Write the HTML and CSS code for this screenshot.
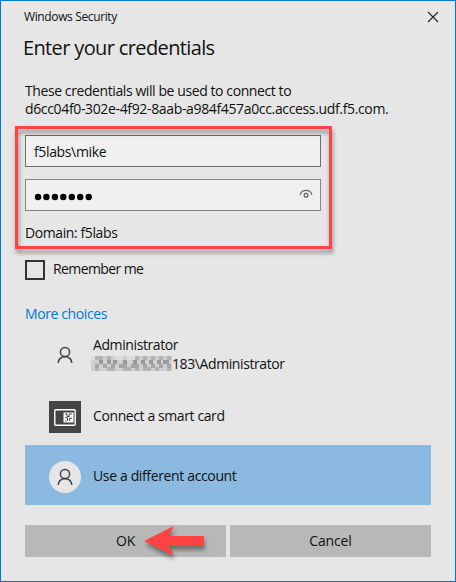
FILE: index.html
```html
<!DOCTYPE html>
<html lang="en">
<head>
<meta charset="utf-8">
<title>Windows Security</title>
<link rel="stylesheet" href="styles.css">
</head>
<body>
<main class="dialog">
  <header class="titlebar">
    <span class="t-bar">Windows Security</span>
    <svg class="close" width="12" height="12" viewBox="0 0 12 12"><path d="M1 1l10 10M11 1L1 11" stroke="#222" stroke-width="1.1" fill="none"/></svg>
  </header>
  <h1 class="t-head">Enter your credentials</h1>
  <p class="intro"><span class="t-intro1">These credentials will be used to connect to</span><br><span class="t-intro2">d6cc04f0-302e-4f92-8aab-a984f457a0cc.access.udf.f5.com.</span></p>
  <section class="fields">
    <div class="field field-user"><span class="t-user">f5labs\mike</span></div>
    <div class="field">
      <svg class="dots" width="62" height="10" viewBox="0 0 62 10"><g fill="#000"><circle cx="5" cy="5" r="3.2"/><circle cx="13.4" cy="5" r="3.2"/><circle cx="21.9" cy="5" r="3.2"/><circle cx="30.3" cy="5" r="3.2"/><circle cx="38.8" cy="5" r="3.2"/><circle cx="47.2" cy="5" r="3.2"/><circle cx="55.7" cy="5" r="3.2"/></g></svg>
      <svg class="eye" width="14" height="10" viewBox="0 0 14 10"><path d="M1 6.2C1.8 3 4 1.4 7 1.4S12.2 3 13 6.2" fill="none" stroke="#666" stroke-width="1.1"/><circle cx="7" cy="6.3" r="1.9" fill="none" stroke="#555" stroke-width="1.2"/></svg>
    </div>
    <div class="domain"><span class="t-domain">Domain: f5labs</span></div>
    <div class="highlight"></div>
  </section>
  <div class="remember"><span class="box"></span><span class="t-remember">Remember me</span></div>
  <div class="more"><span class="t-more">More choices</span></div>
  <ul class="choices">
    <li class="choice admin">
      <span class="icon"><svg width="16" height="18" viewBox="0 0 16 18"><g fill="none" stroke="#444" stroke-width="1.5"><circle cx="8" cy="6" r="4.6"/><path d="M1.2 17C1.5 13 4.2 10.7 8 10.7S14.5 13 14.8 17"/></g></svg></span>
      <div class="lines">
        <div><span class="t-admin">Administrator</span></div>
        <div class="account"><svg class="mosaic" width="81" height="15" viewBox="0 0 81 15" fill="none" stroke-width="4" shape-rendering="crispEdges">
          <path d="M0 7.500h81" stroke="#cfcfcf" stroke-width="15"/>
          <path d="M0 2h4M24 2h8M36 2h4M40 2h4M36 14h4" stroke="#dddddd"/>
          <path d="M4 2h8M16 2h4M44 2h4M52 2h4M60 2h4M68 2h4M76 2h4M4 13h4M16 13h8M32 13h8M44 13h4M52 13h8M64 13h4M76 13h4" stroke="#b3b3b3"/>
          <path d="M8 6h4M16 6h4M22 6h4M32 6h4M42 6h4M50 6h4M58 6h4M66 6h4M72 6h6" stroke="#999999"/>
          <path d="M4 10h4M12 10h4M20 10h4M28 10h8M32 10h4M40 10h8M52 10h4M60 10h4M68 10h4M76 10h4" stroke="#a6a6a6"/>
        </svg><span class="t-path">183\Administrator</span></div>
      </div>
    </li>
    <li class="choice card">
      <span class="icon dark"><svg width="22" height="17" viewBox="0 0 22 17"><rect x=".8" y=".8" width="20.4" height="15.4" rx="1" fill="none" stroke="#fff" stroke-width="1.4"/><path d="M9.500 3.500h10v10h-10z" fill="#fff"/><path d="M11 5h2v2.500h2M16 5h2M11 8.700h2.500v3M15.200 4.500v3.500M15.500 12V9.300H18M11 12h1.500" fill="none" stroke="#444" stroke-width="1"/></svg></span>
      <span class="t-card">Connect a smart card</span>
    </li>
    <li class="choice selected">
      <span class="icon round"><svg width="16" height="18" viewBox="0 0 16 18"><g fill="none" stroke="#444" stroke-width="1.5"><circle cx="8" cy="6" r="4.6"/><path d="M1.2 17C1.5 13 4.2 10.7 8 10.7S14.5 13 14.8 17"/></g></svg></span>
      <span class="t-diff">Use a different account</span>
    </li>
  </ul>
  <footer class="actions">
    <div class="button"><span class="t-ok">OK</span>
      <svg class="arrow" width="62" height="32" viewBox="0 0 62 32"><path d="M0 16L30 1L25 11H60V21H25L30 31Z" fill="#ff4343"/></svg>
    </div>
    <div class="button"><span class="t-cancel">Cancel</span></div>
  </footer>
</main>
</body>
</html>
```

FILE: styles.css
```css
* { box-sizing: border-box; }
body { margin: 0; }
.dialog {
  width: 456px;
  height: 582px;
  padding: 0 24px;
  border: 1px solid #0078d7;
  background: #e6e6e6;
  color: #111;
  font: 14px/18px "Open Sans", "Noto Sans", sans-serif;
  letter-spacing: -.4px;
  white-space: nowrap;
  overflow: hidden;
}
.titlebar { display: flex; align-items: center; justify-content: space-between; height: 31px; margin-right: -8px; font-size: 12px; }
.t-bar { letter-spacing: -.37px; margin-left: -1px; }
.t-head { display: block; margin: 0 0 0 -2px; height: 32px; font-size: 20px; line-height: 32px; font-weight: 400; letter-spacing: -.63px; }
.intro { margin: 18px 0 0; height: 36px; }
.t-intro1 { letter-spacing: -.41px; }
.t-intro2 { letter-spacing: -.35px; }
.fields { position: relative; margin-top: 17px; height: 115px; }
.field { display: flex; align-items: center; width: 296px; height: 32px; padding: 0 8px; border: 1px solid #848484; background: #f0f0f0; margin-bottom: 12px; }
.field-user { padding-top: 2px; border-color: #6f6f6f; }
.t-user { letter-spacing: -.36px; }
.dots { margin: 3px 0 0 -1px; }
.eye { margin-left: auto; margin-right: -1px; margin-top: -2px; }
.domain { height: 20px; margin-top: 12px; line-height: 20px; }
.highlight { position: absolute; left: -10px; top: -9px; width: 317px; height: 123px; border: 3px solid #ff4343; filter: drop-shadow(1px 4px 2px rgba(0,0,0,.4)); }
.remember { display: flex; align-items: center; height: 20px; margin-top: 10px; gap: 8px; }
.t-remember { letter-spacing: -.6px; margin-top: -2px; }
.box { width: 20px; height: 20px; border: 2px solid #333; }
.more { margin-top: 25px; height: 18px; color: #0078d7; }
.choices { list-style: none; margin: 7px 0 0; padding: 0; }
.choice { display: flex; align-items: center; gap: 12px; height: 60px; padding-left: 24px; }
.admin { height: 50px; }
.lines { line-height: 19px; margin-top: -2px; }
.account { display: flex; align-items: center; height: 19px; }
.mosaic { margin-left: -2px; }
.card { height: 60px; margin-top: 7px; margin-bottom: -2px; }
.t-card { margin-top: -2px; }
.selected { background: #8bb9e0; }
.t-diff { letter-spacing: -.36px; margin-top: 2px; }
.icon { display: flex; align-items: center; justify-content: center; width: 32px; height: 32px; flex: none; }
.dark { background: #444; }
.round { background: #e6e6e6; border-radius: 50%; }
.selected .icon { margin-top: 4px; }
.actions { display: flex; gap: 4px; margin-top: 20px; }
.button { position: relative; display: flex; align-items: center; justify-content: center; width: 201px; height: 32px; background: #b8b8b8; letter-spacing: -.15px; }
.arrow { position: absolute; left: 119px; top: 0; filter: drop-shadow(1px 4px 2px rgba(0,0,0,.4)); overflow: visible; }
```
